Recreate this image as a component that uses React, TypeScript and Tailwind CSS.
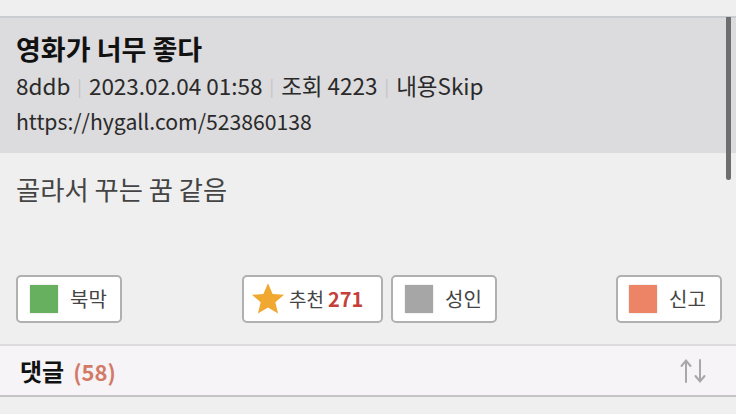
const font = { fontFamily: '"Noto Sans CJK KR", "Noto Sans", sans-serif' };

const Sep = () => <span className="mx-[7px] text-[#c4c4c4] text-[17px] relative -top-[2px]">|</span>;

const Swatch = ({ color }: { color: string }) => (
  <span className={`w-[28px] h-[28px] ${color} shadow-[0_0_2px_rgba(0,0,0,0.15)]`} />
);

const Star = () => (
  <svg width="36" height="36" viewBox="0 0 24 24">
    <path
      d="M12 1.5l3.1 7.1 7.6.6-5.8 5 1.8 7.5L12 17.7l-6.7 4 1.8-7.5-5.8-5 7.6-.6z"
      fill="#f0a830"
    />
  </svg>
);

const SortArrows = () => (
  <svg width="28" height="26" viewBox="0 0 28 26" fill="none" stroke="#a8a8a8" strokeWidth="2" strokeLinecap="round">
    <path d="M7 24V3M2.5 8L7 2.5 11.5 8" />
    <path d="M21 2v21M16.5 18l4.5 5.5 4.5-5.5" />
  </svg>
);

export default function App() {
  return (
    <div className="w-[736px] h-[414px] bg-[#efefef] overflow-hidden relative" style={font}>
      <div className="h-[16px] bg-[#efefef]" />
      <div className="h-[2px] bg-[#c9cdd1]" />

      {/* header */}
      <div className="bg-[#dcdbdd] h-[135px] pl-[16px] pt-[13px]">
        <h1 className="text-[27px] font-bold text-[#111] leading-[36px]">영화가 너무 좋다</h1>
        <div className="text-[22.5px] text-[#2a2a2a] leading-[30px] mt-[3px]">
          8ddb<Sep />2023.02.04 01:58<Sep />조회 4223<Sep />내용Skip
        </div>
        <div className="text-[21.2px] text-[#2a2a2a] leading-[30px] mt-[3px]">https://hygall.com/523860138</div>
      </div>

      {/* scrollbar */}
      <div className="absolute left-[726px] top-[17px] w-[5px] h-[163px] bg-[#6e6e6e] rounded-b-[3px]" />

      {/* content */}
      <div className="h-[191px] pl-[16px] pt-[18px]">
        <p className="text-[26.3px] text-[#444] leading-[36px]">골라서 꾸는 꿈 같음</p>
        <div className="flex items-center mt-[68px] pr-[14px]">
          <button className="w-[106px] h-[48px] flex items-center gap-[12px] pl-[12px] bg-white border-2 border-[#b0b0b0] rounded-[5px] text-[20px] text-[#444]">
            <Swatch color="bg-[#66b060]" />
            북막
          </button>
          <button className="ml-[120px] w-[141px] h-[48px] flex items-center gap-[3px] pl-[6px] bg-white border-2 border-[#b0b0b0] rounded-[5px] text-[19px] text-[#444]">
            <Star />
            추천 <b className="text-[#c5403b] font-bold ml-[1px] text-[20px]">271</b>
          </button>
          <button className="ml-[8px] w-[106px] h-[48px] flex items-center gap-[12px] pl-[12px] bg-white border-2 border-[#b0b0b0] rounded-[5px] text-[20px] text-[#444]">
            <Swatch color="bg-[#a6a6a6]" />
            성인
          </button>
          <button className="ml-auto w-[106px] h-[48px] flex items-center gap-[12px] pl-[11px] bg-white border-2 border-[#b0b0b0] rounded-[5px] text-[20px] text-[#444]">
            <Swatch color="bg-[#ee8466]" />
            신고
          </button>
        </div>
      </div>

      {/* comments bar */}
      <div className="h-[53px] bg-[#f6f4f6] border-t-2 border-b-2 border-[#dcdcdc] border-b-[#c4c4c4] flex items-center justify-between pl-[20px] pr-[29px]">
        <div className="flex items-baseline gap-[9px]">
          <span className="text-[24px] font-bold text-[#111]">댓글</span>
          <span className="text-[22px] font-bold text-[#d27a66]">(58)</span>
        </div>
        <SortArrows />
      </div>
    </div>
  );
}
